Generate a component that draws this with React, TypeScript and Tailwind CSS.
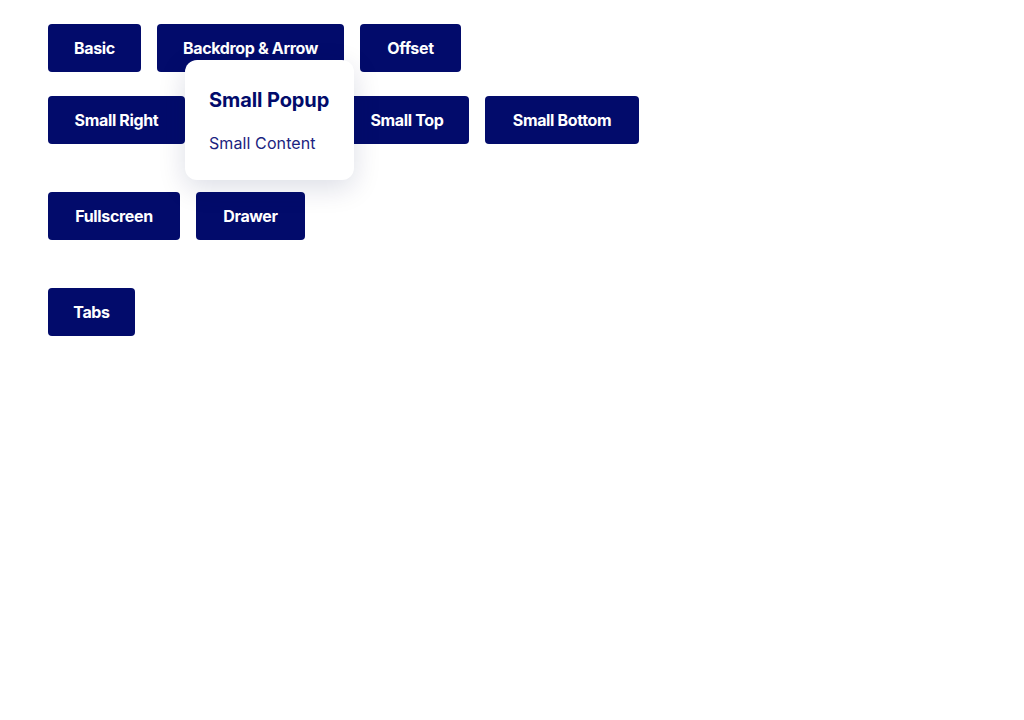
import React from 'react';

function Btn({ children, w }: { children: React.ReactNode; w: string }) {
  return (
    <button className={`${w} h-12 flex items-center justify-center rounded-[4px] bg-[#020b6b] text-white text-[16px] font-bold tracking-[-0.35px] whitespace-nowrap`}>
      {children}
    </button>
  );
}

export default function App() {
  return (
    <div className="relative min-h-[720px] bg-white pl-12 pt-6" style={{ fontFamily: 'Inter, "Noto Sans", sans-serif' }}>
      {/* popups */}
      <div className="flex flex-col gap-6">
        <div className="flex gap-4">
          <Btn w="w-[93px]">Basic</Btn>
          <Btn w="w-[187px]">Backdrop &amp; Arrow</Btn>
          <Btn w="w-[101px]">Offset</Btn>
        </div>
        <div className="flex gap-4">
          <Btn w="w-[137px]">Small Right</Btn>
          <Btn w="w-[128px]">Small Left</Btn>
          <Btn w="w-[124px]">Small Top</Btn>
          <Btn w="w-[154px]">Small Bottom</Btn>
        </div>
      </div>

      <div className="flex gap-4 mt-12">
        <Btn w="w-[132px]">Fullscreen</Btn>
        <Btn w="w-[109px]">Drawer</Btn>
      </div>

      <div className="flex gap-4 mt-12">
        <Btn w="w-[87px]">Tabs</Btn>
      </div>

      {/* open small popup */}
      <div className="absolute left-[185px] top-[60px] w-[169px] h-[120px] bg-white rounded-xl shadow-[0_8px_28px_rgba(10,20,80,0.14)] px-6 pt-[28px]">
        <div className="text-[20px] leading-6 font-bold text-[#020b6b] tracking-[-0.1px] whitespace-nowrap">Small Popup</div>
        <div className="mt-[21px] text-[16px] leading-5 tracking-[0.1px] text-[#1b2380] whitespace-nowrap">Small Content</div>
      </div>
    </div>
  );
}
